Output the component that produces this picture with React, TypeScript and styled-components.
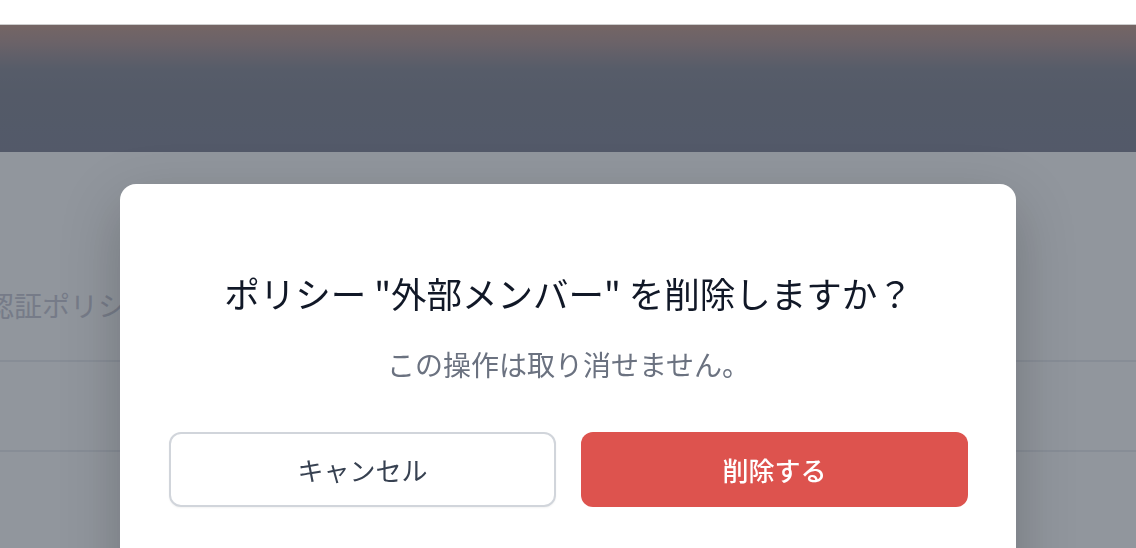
import styled, { createGlobalStyle } from "styled-components";

const GlobalStyle = createGlobalStyle`
  html, body {
    margin: 0;
    padding: 0;
    background: #ffffff;
    font-family: "Noto Sans CJK JP", "Noto Sans", sans-serif;
  }
  * {
    box-sizing: border-box;
  }
`;

export default function App() {
  return (
    <>
      <GlobalStyle />
      <Page>
        <TopStrip />
        <Header />
        <Content>
          <Row>
            <CellText>認証ポリシー</CellText>
          </Row>
          <Row />
        </Content>
      </Page>

      <Overlay>
        <Dialog role="dialog" aria-modal="true">
          <Title>ポリシー "外部メンバー" を削除しますか？</Title>
          <Description>この操作は取り消せません。</Description>
          <Actions>
            <CancelButton>キャンセル</CancelButton>
            <DangerButton>削除する</DangerButton>
          </Actions>
        </Dialog>
      </Overlay>
    </>
  );
}

const Page = styled.div`
  min-height: 548px;
  background: #ffffff;
`;
const TopStrip = styled.div`
  height: 25px;
  background: #ffffff;
  border-bottom: 1px solid #cdcdcd;
`;
const Header = styled.div`
  height: 127px;
  background: linear-gradient(
    180deg,
    #c8a090 0px,
    #b49a98 18px,
    #8d8e9a 44px,
    #878a97 70px,
    #85889a 127px
  );
`;
const Content = styled.div`
  padding-top: 120px;
`;
const Row = styled.div`
  height: 90px;
  display: flex;
  align-items: center;
  border-bottom: 2px solid #eceef2;
`;
const CellText = styled.span`
  margin: 0 0 22px -14px;
  font-size: 28px;
  color: #cbcbd6;
`;
const Overlay = styled.div`
  position: fixed;
  top: 25px;
  left: 0;
  right: 0;
  bottom: 0;
  background: rgba(31, 41, 55, 0.49);
  display: flex;
  justify-content: center;
  align-items: flex-start;
  padding-top: 159px;
  overflow: hidden;
`;
const Dialog = styled.div`
  width: 896px;
  min-height: 420px;
  background: #ffffff;
  border-radius: 16px;
  box-shadow: 0 20px 60px rgba(0, 0, 0, 0.22);
  padding: 84px 48px 48px 49px;
  display: flex;
  flex-direction: column;
  align-items: center;
`;
const Title = styled.h2`
  margin: 0;
  font-size: 35.5px;
  font-weight: 400;
  line-height: 49px;
  color: #111827;
  text-align: center;
`;
const Description = styled.p`
  margin: 26px 0 0;
  font-size: 28px;
  line-height: 42px;
  color: #6b7280;
  text-align: center;
`;
const Actions = styled.div`
  width: 100%;
  margin-top: 47px;
  display: grid;
  grid-template-columns: 1fr 1fr;
  gap: 25px;
`;
const BaseButton = styled.button`
  height: 75px;
  border-radius: 12px;
  font-family: inherit;
  font-size: 26px;
  cursor: pointer;
`;
const CancelButton = styled(BaseButton)`
  background: #ffffff;
  color: #374151;
  border: 2px solid #d1d5db;
  box-shadow: 0 1px 2px rgba(0, 0, 0, 0.05);
`;
const DangerButton = styled(BaseButton)`
  background: #dd534e;
  color: #ffffff;
  border: none;
  font-weight: 500;
`;
